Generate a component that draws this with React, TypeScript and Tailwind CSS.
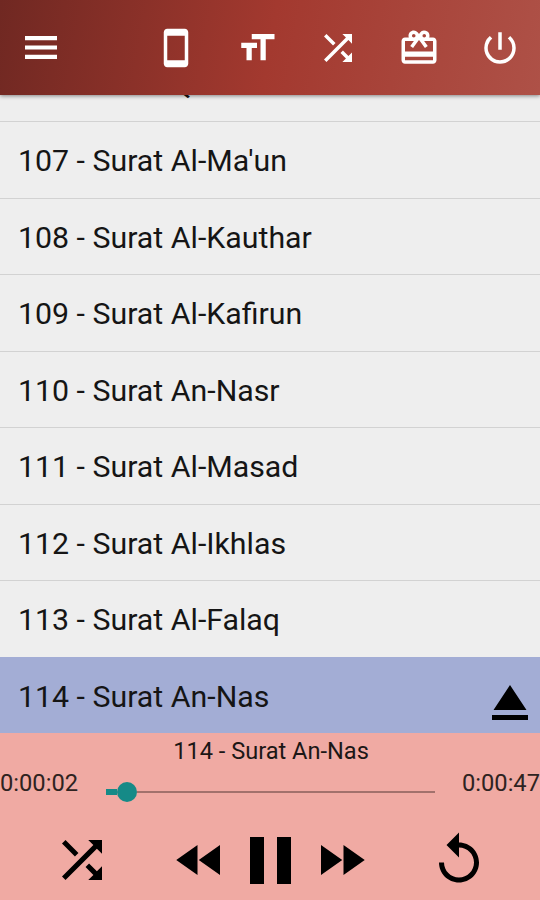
import React from 'react';
import {
  MdCardGiftcard,
  MdFastForward,
  MdFastRewind,
  MdFormatSize,
  MdPowerSettingsNew,
  MdReplay,
  MdShuffle,
  MdStayCurrentPortrait,
} from 'react-icons/md';

interface Track {
  number: number;
  name: string;
}

const tracks: Track[] = [
  { number: 106, name: 'Surat Quraish' },
  { number: 107, name: "Surat Al-Ma'un" },
  { number: 108, name: 'Surat Al-Kauthar' },
  { number: 109, name: 'Surat Al-Kafirun' },
  { number: 110, name: 'Surat An-Nasr' },
  { number: 111, name: 'Surat Al-Masad' },
  { number: 112, name: 'Surat Al-Ikhlas' },
  { number: 113, name: 'Surat Al-Falaq' },
  { number: 114, name: 'Surat An-Nas' },
];

const Toolbar: React.FC = () => (
  <header className="z-10 flex h-[95px] shrink-0 items-center justify-between bg-[linear-gradient(100deg,#702822_0%,#a3392f_50%,#ae5147_100%)] pr-[19px] pl-[25px] text-white shadow-[0_1px_4px_rgba(0,0,0,0.45)]">
    <button aria-label="Menu">
      <svg className="h-[23px] w-[32px]" viewBox="0 0 32 23" fill="currentColor">
        <path d="M0 0h32v4.2H0zM0 9.4h32v4.2H0zM0 18.8h32V23H0z" />
      </svg>
    </button>
    <div className="flex items-center gap-[39px]">
      <button aria-label="Screen"><MdStayCurrentPortrait className="size-[42px]" /></button>
      <button aria-label="Text size"><MdFormatSize className="size-[42px]" /></button>
      <button aria-label="Shuffle"><MdShuffle className="size-[42px]" /></button>
      <button aria-label="Gift"><MdCardGiftcard className="size-[42px]" /></button>
      <button aria-label="Exit"><MdPowerSettingsNew className="size-[42px]" /></button>
    </div>
  </header>
);

const TrackRow: React.FC<{ track: Track; active: boolean }> = ({ track, active }) => (
  <li
    className={`flex h-[76.5px] shrink-0 items-center justify-between border-t pr-[12px] pl-[18px] ${
      active ? 'border-[#a3add5] bg-[#a3add5]' : 'border-[#d2d2d2]'
    }`}
  >
    <span className="pt-[3px] text-[30.3px] leading-9">
      {track.number} - {track.name}
    </span>
    {active && (
      <svg className="mt-[14px] h-[35px] w-[36px] text-black" viewBox="0 0 36 35" fill="currentColor">
        <path d="M18 0L34.5 25H1.5zM0 30h36v5H0z" />
      </svg>
    )}
  </li>
);

const Player: React.FC = () => (
  <footer className="flex h-[167px] shrink-0 flex-col bg-[#f0aaa3]">
    <div className="pt-[4px] pl-[2px] text-center text-[23.6px] leading-7 text-[#1c1716]">114 - Surat An-Nas</div>
    <div className="flex h-[38px] items-start justify-between text-[23.7px] leading-[37px] text-[#2e2321]">
      <span className="w-[106px]">0:00:02</span>
      <div className="mt-[17px] flex h-5 flex-1 items-center">
        <div className="h-[6px] w-[11px] bg-[#158a87]" />
        <div className="size-5 rounded-full bg-[#158a87]" />
        <div className="h-[2px] flex-1 bg-[#a2716c]" />
      </div>
      <span className="w-[105px] text-right">0:00:47</span>
    </div>
    <div className="flex flex-1 items-center pt-[17px] pl-[52px] text-black">
      <button aria-label="Shuffle"><MdShuffle className="size-[60px]" /></button>
      <button aria-label="Previous" className="ml-[58px]"><MdFastRewind className="size-[60px]" /></button>
      <button aria-label="Pause" className="ml-[20px]">
        <svg className="h-[47px] w-[41px]" viewBox="0 0 41 47" fill="currentColor">
          <path d="M0 0h14v47H0zM27 0h14v47H27z" />
        </svg>
      </button>
      <button aria-label="Next" className="ml-[20px]"><MdFastForward className="size-[60px]" /></button>
      <button aria-label="Repeat" className="ml-[58px]"><MdReplay className="size-[60px]" /></button>
    </div>
  </footer>
);

export default function App() {
  const current = 114;

  return (
    <div className="flex h-[900px] w-[540px] flex-col overflow-hidden bg-[#eeeeee] font-[Roboto,sans-serif] text-[#151515]">
      <Toolbar />
      <ul className="flex min-h-0 flex-1 flex-col justify-end overflow-hidden">
        {tracks.map((track) => (
          <TrackRow key={track.number} track={track} active={track.number === current} />
        ))}
      </ul>
      <Player />
    </div>
  );
}
